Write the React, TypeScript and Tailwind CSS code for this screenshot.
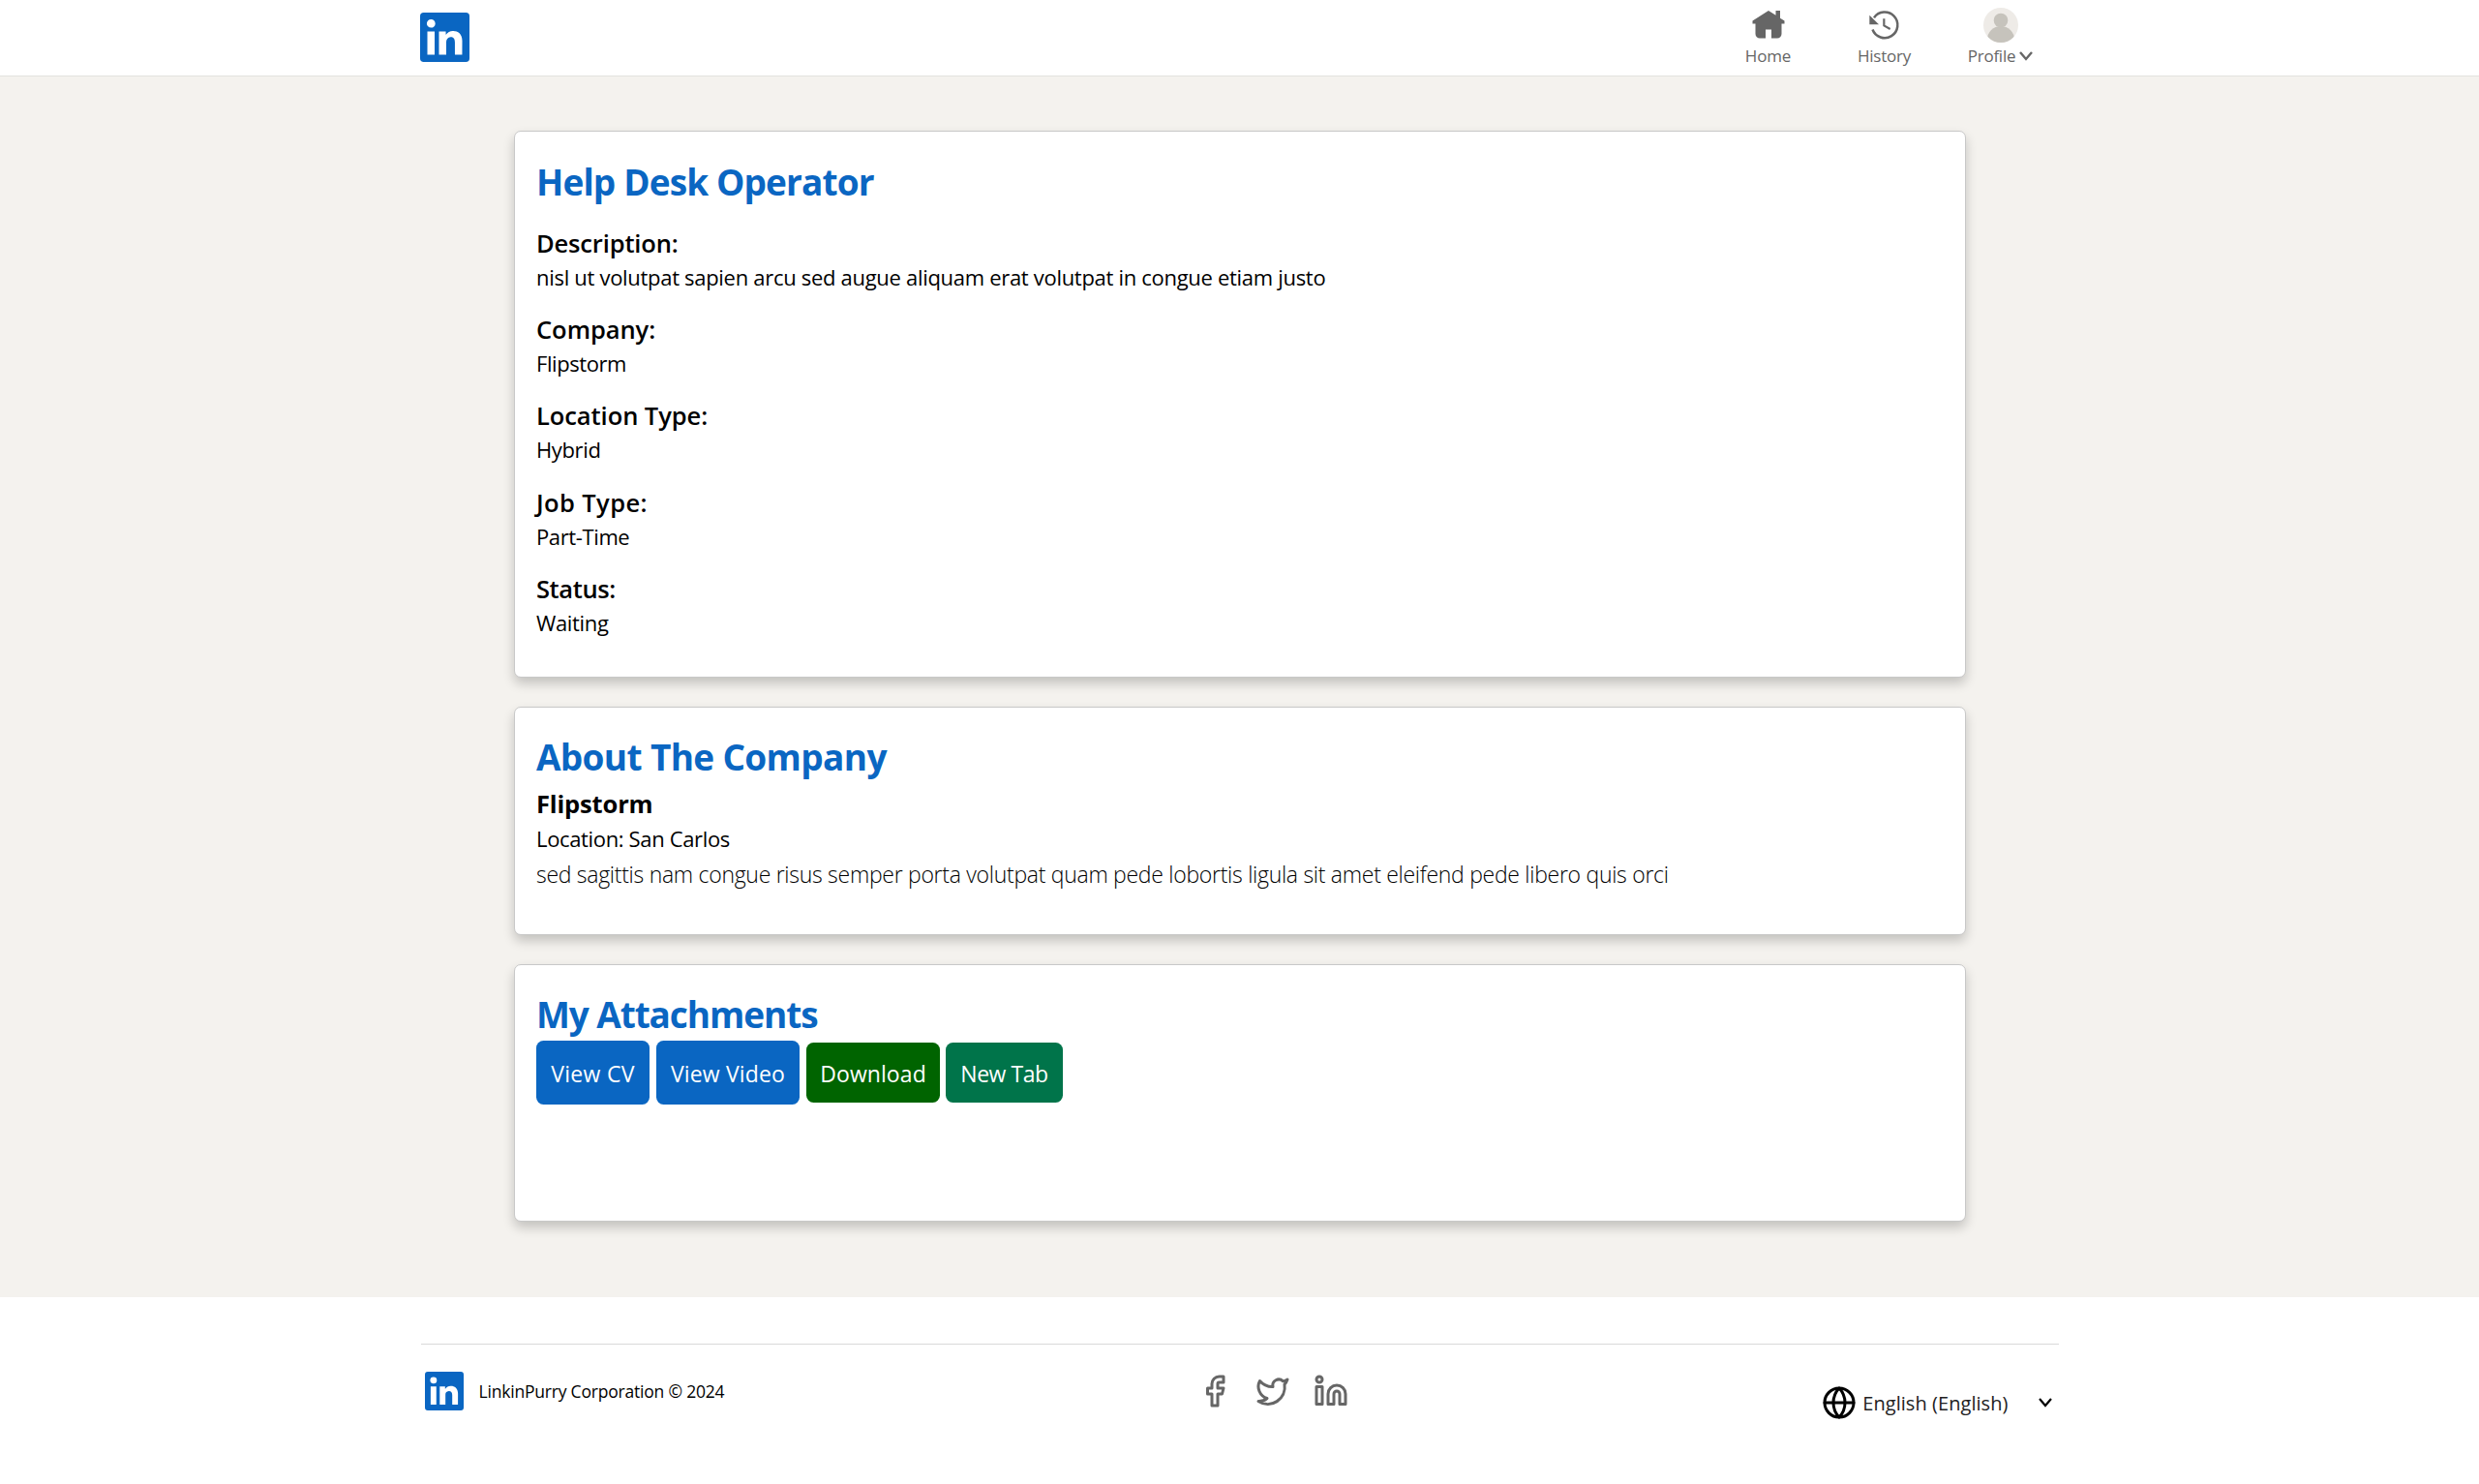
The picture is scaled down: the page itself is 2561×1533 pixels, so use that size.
import React from "react";
import { Facebook, Globe, Linkedin, Twitter } from "lucide-react";

function Logo({ className }: { className: string }) {
  return (
    <svg viewBox="0 0 34 34" className={className} fill="currentColor" aria-label="LinkinPurry">
      <path d="M34 2.5v29A2.5 2.5 0 0131.5 34h-29A2.5 2.5 0 010 31.5v-29A2.5 2.5 0 012.5 0h29A2.5 2.5 0 0134 2.5zM10 13H5v16h5zm.45-5.5A2.88 2.88 0 007.59 4.6H7.5a2.9 2.9 0 000 5.8 2.88 2.88 0 002.95-2.81zM29 19.28c0-4.81-3.06-6.68-6.1-6.68a5.7 5.7 0 00-5.06 2.58h-.14V13H13v16h5v-8.51a3.32 3.32 0 013-3.58h.19c1.59 0 2.77 1 2.77 3.52V29h5z" />
    </svg>
  );
}

function HomeIcon() {
  return (
    <svg viewBox="0 0 24 24" className="size-9" fill="currentColor">
      <path d="M23 9v2h-2v7a3 3 0 01-3 3h-4v-6h-4v6H6a3 3 0 01-3-3v-7H1V9l11-7 5 3.18V2h3v5.09z" />
    </svg>
  );
}

function HistoryIcon() {
  return (
    <svg viewBox="0 0 108 108" className="size-9" fill="none" stroke="currentColor" strokeWidth="7.5">
      <path d="M16.5 67.5A40 40 0 1 0 21 31" />
      <path d="M52 34v21l19 11" strokeWidth="6.5" />
      <path d="M7 23v29h29z" fill="currentColor" stroke="none" />
    </svg>
  );
}

function Avatar() {
  return (
    <svg viewBox="0 0 108 108" className="size-9 rounded-full bg-[#eeebe7]" fill="#c6c3bc">
      <circle cx="54" cy="39" r="22" />
      <circle cx="54" cy="99" r="42" />
    </svg>
  );
}

function Chevron({ className, strokeWidth }: { className: string; strokeWidth: number }) {
  return (
    <svg viewBox="0 0 14 10" className={className} fill="none" stroke="currentColor" strokeWidth={strokeWidth}>
      <path d="M1 1l6 7 6-7" />
    </svg>
  );
}

function NavItem({ icon, children }: { icon: React.ReactNode; children: React.ReactNode }) {
  return (
    <a className="flex w-[120px] flex-col items-center pt-2 text-[17px] leading-[24px] text-[#666666]">
      {icon}
      <span className="mt-0.5 mr-px flex items-center">{children}</span>
    </a>
  );
}

function Card({ className, children }: { className: string; children: React.ReactNode }) {
  return (
    <section
      className={`rounded-[7px] border border-[#c8c8c8] bg-white px-[22.5px] shadow-[0_6px_12px_rgba(0,0,0,0.2)] ${className}`}
    >
      {children}
    </section>
  );
}

function CardTitle({ className, children }: { className: string; children: React.ReactNode }) {
  return <h2 className={`text-[37px] leading-[50px] font-bold text-[#0a66c2] ${className}`}>{children}</h2>;
}

const details = [
  {
    label: "Description:",
    value: "nisl ut volutpat sapien arcu sed augue aliquam erat volutpat in congue etiam justo",
    labelTracking: "tracking-[-0.15px]",
    valueTracking: "tracking-[-0.3px]",
  },
  { label: "Company:", value: "Flipstorm", labelTracking: "tracking-[-0.05px]", valueTracking: "tracking-[-0.42px]" },
  { label: "Location Type:", value: "Hybrid", labelTracking: "tracking-[-0.07px]", valueTracking: "tracking-[-0.36px]" },
  { label: "Job Type:", value: "Part-Time", labelTracking: "tracking-[0.4px]", valueTracking: "tracking-[-0.38px]" },
  { label: "Status:", value: "Waiting", labelTracking: "tracking-[-0.4px]", valueTracking: "tracking-[-0.35px]" },
];

const attachments = [
  { label: "View CV", style: "h-[66px] w-[117px] bg-[#0a66c2] tracking-[0.3px] mr-[7px]" },
  { label: "View Video", style: "h-[66px] w-[148px] bg-[#0a66c2] tracking-[0.14px] mr-[7px]" },
  { label: "Download", style: "h-[62px] w-[138px] bg-[#006400] tracking-[0.08px] mr-1.5" },
  { label: "New Tab", style: "h-[62px] w-[121px] bg-[#00744a] tracking-[-0.44px]" },
];

export default function App() {
  return (
    <div className="flex min-h-[1533px] flex-col bg-white font-['Open_Sans','Noto_Sans',sans-serif] text-black">
      <header className="h-[79px] border-b border-[#e3e2df] bg-white">
        <div className="mx-auto flex w-[1693px] justify-between">
          <Logo className="mt-[13px] size-[51px] text-[#0a66c2]" />
          <nav className="flex">
            <NavItem icon={<HomeIcon />}>
              <span className="tracking-[-0.18px]">Home</span>
            </NavItem>
            <NavItem icon={<HistoryIcon />}>
              <span className="tracking-[-0.25px]">History</span>
            </NavItem>
            <NavItem icon={<Avatar />}>
              <span className="tracking-[-0.24px]">Profile</span>
              <Chevron className="ml-1 h-2.5 w-3.5" strokeWidth={2.4} />
            </NavItem>
          </nav>
        </div>
      </header>

      <main className="flex h-[1261px] flex-col items-center gap-[30px] bg-[#f4f2ee] pt-14 *:w-[1500px]">
        <Card className="h-[565px] pt-[27px]">
          <CardTitle className="tracking-[-0.87px]">Help Desk Operator</CardTitle>
          <dl className="mt-5 flex flex-col gap-[18.2px]">
            {details.map((d) => (
              <div key={d.label}>
                <dt className={`text-[25.5px] leading-[36px] font-semibold ${d.labelTracking}`}>{d.label}</dt>
                <dd className={`text-[22px] leading-[35px] ${d.valueTracking}`}>{d.value}</dd>
              </div>
            ))}
          </dl>
        </Card>

        <Card className="h-[236px] pt-[26px]">
          <CardTitle className="tracking-[-0.66px]">About The Company</CardTitle>
          <h3 className="mt-[5px] text-[25.5px] leading-[36px] font-bold tracking-[-0.15px]">Flipstorm</h3>
          <p className="mt-px text-[22px] leading-[35px] tracking-[-0.35px]">Location: San Carlos</p>
          <p className="mt-px text-[23px] leading-[36px] font-light tracking-[-0.285px]">
            sed sagittis nam congue risus semper porta volutpat quam pede lobortis ligula sit amet eleifend pede libero
            quis orci
          </p>
        </Card>

        <Card className="h-[266px] pt-[26px]">
          <CardTitle className="tracking-[-1.1px]">My Attachments</CardTitle>
          <div className="mt-0.5 flex items-center">
            {attachments.map((a) => (
              <button
                key={a.label}
                className={`flex items-center justify-center rounded-[7.5px] pt-[3px] text-[23px] leading-none whitespace-nowrap text-white ${a.style}`}
              >
                {a.label}
              </button>
            ))}
          </div>
        </Card>
      </main>

      <footer className="mx-auto grid w-[1692px] grid-cols-3 pt-12">
        <div className="col-span-3 h-px bg-[#d9d9d9]" />
        <div className="flex items-center self-start pt-7 pl-1">
          <Logo className="size-10 text-[#0a66c2]" />
          <span className="ml-4 text-[17.5px] leading-10 tracking-[-0.2px]">LinkinPurry Corporation © 2024</span>
        </div>
        <div className="flex gap-6 pt-[30px] pl-[238px] text-[#666666]">
          <Facebook className="size-9" />
          <Twitter className="size-9" />
          <Linkedin className="size-9" />
        </div>
        <div className="flex items-center justify-end pt-10 pr-[7px]">
          <Globe className="size-9" />
          <span className="mt-[3px] ml-[6px] text-[20px] leading-9 tracking-[0.06px] text-[#222222]">
            English (English)
          </span>
          <Chevron className="ml-[31px] h-2.5 w-3.5" strokeWidth={2.2} />
        </div>
      </footer>
    </div>
  );
}
